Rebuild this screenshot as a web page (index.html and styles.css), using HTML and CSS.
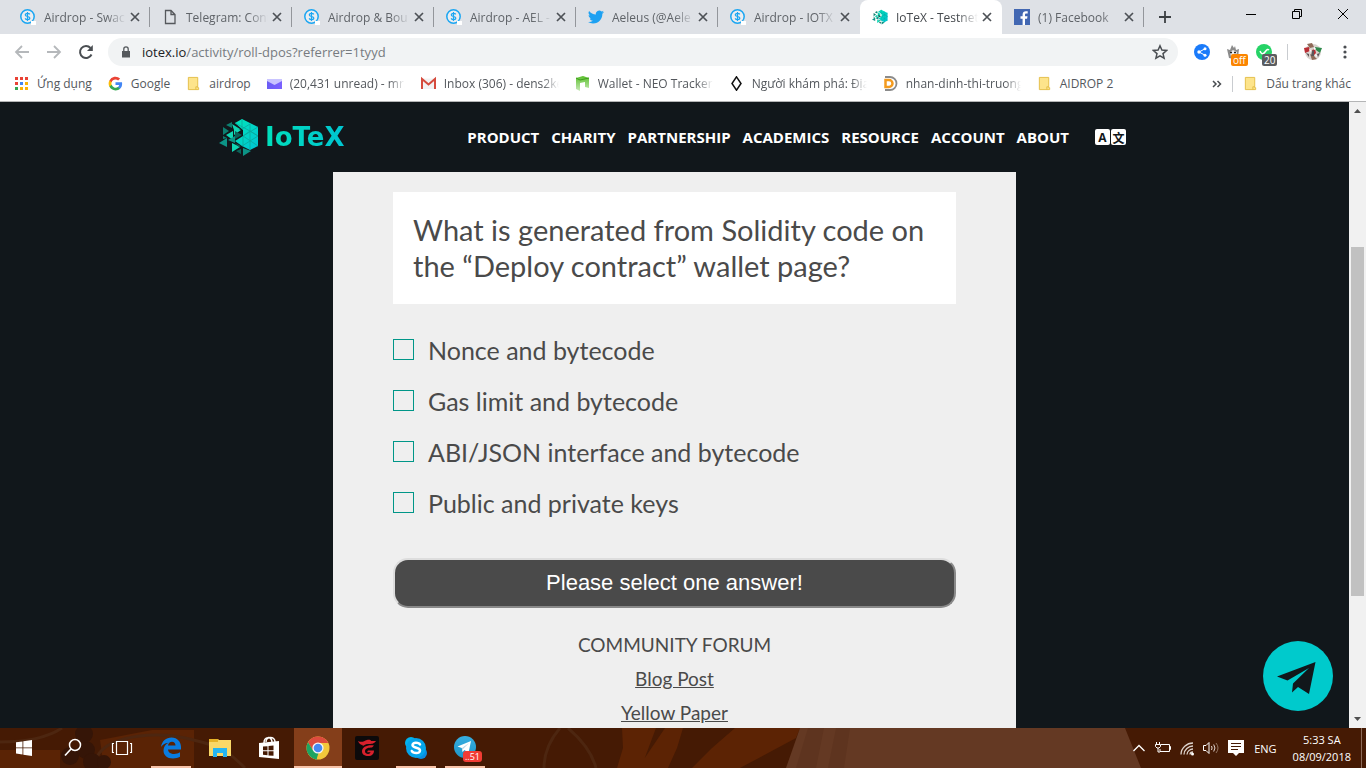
FILE: index.html
```html
<!DOCTYPE html>
<html lang="en">
<head>
<meta charset="utf-8">
<title>IoTeX - Testnet</title>
<link rel="stylesheet" href="styles.css">
</head>
<body>
<svg class="defs" aria-hidden="true">
  <defs>
    <linearGradient id="teal" x1="0" y1="0" x2="1" y2="1"><stop offset="0" stop-color="#00e6b8"/><stop offset="1" stop-color="#00c3d5"/></linearGradient>
    <linearGradient id="sky" x1="0" y1="0" x2="0" y2="1"><stop offset="0" stop-color="#37aee2"/><stop offset="1" stop-color="#1e96c8"/></linearGradient>
    <linearGradient id="neo" x1="0" y1="0" x2="0" y2="1"><stop offset="0" stop-color="#5abf2c"/><stop offset="1" stop-color="#c9eab8"/></linearGradient>
    <linearGradient id="mail" x1="0" y1="0" x2="1" y2="0"><stop offset="0" stop-color="#6a5cf5"/><stop offset="1" stop-color="#7b61ff"/></linearGradient>
    <symbol id="coin" viewBox="0 0 16 16"><circle cx="7.5" cy="7.5" r="6.7" fill="#fff" fill-opacity=".4" stroke="#1ba6f2" stroke-width="1.5"/><path d="M9.8 5.4C9.3 4.5 8.4 4.3 7.5 4.3c-1.300 0-2.200.6-2.200 1.600 0 2.200 4.500 1 4.500 3.200 0 1-.9 1.600-2.200 1.600-1.200 0-2-.4-2.500-1.300M7.500 3v9" fill="none" stroke="#1ba6f2" stroke-width="1.200"/><path d="M11 12h5v4h-5z" fill="#fff"/></symbol>
    <symbol id="close" viewBox="0 0 10 10"><path d="M1 1l8 8M9 1l-8 8" stroke="#4d5156" stroke-width="1.700"/></symbol>
    <symbol id="page" viewBox="0 0 16 16"><path d="M3.500 1.500h5.500l4 4v9h-9.500zM9 1.500v4h4" fill="none" stroke="#55585c" stroke-width="1.300"/></symbol>
    <symbol id="bird" viewBox="0 0 24 24"><path fill="#1da1f2" d="M24 4.600c-.9.4-1.800.7-2.800.8 1-.6 1.800-1.600 2.200-2.700-1 .6-2 1-3.100 1.200a4.900 4.900 0 0 0-8.400 4.500C7.700 8.200 4.100 6.200 1.700 3.100a4.900 4.900 0 0 0 1.500 6.600c-.8 0-1.600-.2-2.200-.6v.1c0 2.400 1.700 4.400 3.900 4.800-.7.200-1.500.2-2.200.1.600 2 2.400 3.400 4.600 3.400A9.900 9.900 0 0 1 0 19.500 14 14 0 0 0 7.500 21.700c9.100 0 14-7.500 14-14v-.6c1-.7 1.800-1.600 2.500-2.500z"/></symbol>
    <symbol id="folder" viewBox="0 0 14 16"><path d="M1.500 1.500h10v11h1v2h-11z" fill="#fde48b" stroke="#e3bd45"/><path d="M9.500 14.500v-3h2" fill="none" stroke="#e3bd45"/></symbol>
    <symbol id="mark" viewBox="0 0 40 38">
      <path d="M23 1l16 8v19l-8 4-8-4-7-5 8-5v-6l-8-7z" fill="url(#teal)"/>
      <path d="M16 5l15 8 8 5-8 5-8 5M23 1v10l8-5v26M39 9l-15 9 15 10M39 18l-8-5-7 5v10" fill="none" stroke="#0aa79c" stroke-width=".8"/>
      <path d="M13 6l8 5-6 1zM15 9l7 3-7 5zM7 17l7-4v9zM13 25l8 4-8 5z" fill="#10d6b4"/>
      <path d="M7 7l6-3v6zM4 9l6 4-6 4zM4 18l4 2-4 1z" fill="#0c7f70"/>
      <path d="M0 25l8-5v9zM9 22l7-4v7zM24 30l8 3-8 5z" fill="#0c9486"/>
      <path d="M16 13l7 4-7 4zM16 25l6 3-2 1zM22 31v5l-5-3z" fill="#0b6158"/>
    </symbol>
    <symbol id="chrome" viewBox="0 0 24 24"><circle cx="12" cy="12" r="11.500" fill="#f2c73b"/><path d="M2 6.300A11.500 11.500 0 0 1 22.300 7H12L7 14.500z" fill="#dd4b3e"/><path d="M2 6.300l5.300 8.700L11 23.400A11.500 11.500 0 0 1 2 6.300z" fill="#1da462"/><path d="M7 14l5.500 3-2 6.400C9 23 6 22 4 19z" fill="#1da462"/><circle cx="12" cy="12" r="5.600" fill="#f5f5f5"/><circle cx="12" cy="12" r="4.300" fill="#4688f1"/></symbol>
  </defs>
</svg>

<div class="browser">
  <div class="tabstrip">
    <div class="tab"><svg class="fav"><use href="#coin"/></svg><span class="tab-title">Airdrop - Swac</span><button class="tab-close" aria-label="Close tab"><svg><use href="#close"/></svg></button></div>
    <div class="tab"><svg class="fav"><use href="#page"/></svg><span class="tab-title">Telegram: Cont</span><button class="tab-close" aria-label="Close tab"><svg><use href="#close"/></svg></button></div>
    <div class="tab"><svg class="fav"><use href="#coin"/></svg><span class="tab-title">Airdrop &amp; Bou</span><button class="tab-close" aria-label="Close tab"><svg><use href="#close"/></svg></button></div>
    <div class="tab"><svg class="fav"><use href="#coin"/></svg><span class="tab-title">Airdrop - AEL -</span><button class="tab-close" aria-label="Close tab"><svg><use href="#close"/></svg></button></div>
    <div class="tab"><svg class="fav"><use href="#bird"/></svg><span class="tab-title">Aeleus (@Aele</span><button class="tab-close" aria-label="Close tab"><svg><use href="#close"/></svg></button></div>
    <div class="tab last-before"><svg class="fav"><use href="#coin"/></svg><span class="tab-title">Airdrop - IOTX</span><button class="tab-close" aria-label="Close tab"><svg><use href="#close"/></svg></button></div>
    <div class="tab active"><svg class="fav"><use href="#mark"/></svg><span class="tab-title">IoTeX - Testnet</span><button class="tab-close" aria-label="Close tab"><svg><use href="#close"/></svg></button></div>
    <div class="tab"><svg class="fav" viewBox="0 0 16 16"><path d="M0 0h16v16H0z" fill="#4267b2"/><path d="M11 16V9.800h2.100l.4-2.500H11V5.800c0-.8.3-1.300 1.400-1.300h1.300V2.300c-.4 0-1-.1-1.800-.1-2 0-3.300 1.200-3.300 3.300v1.800H6.500v2.500h2.100V16z" fill="#fff"/></svg><span class="tab-title">(1) Facebook</span><button class="tab-close" aria-label="Close tab"><svg><use href="#close"/></svg></button></div>
    <button class="new-tab" aria-label="New tab"><svg viewBox="0 0 12 12"><path d="M6 0v12M0 6h12" stroke="#3c4043" stroke-width="1.800"/></svg></button>
    <div class="window-buttons">
      <button aria-label="Minimize"><svg viewBox="0 0 12 12"><path d="M1 6.500h10" stroke="#000"/></svg></button>
      <button aria-label="Restore"><svg viewBox="0 0 12 12"><path d="M1.500 3.500h7v7h-7zM3.500 3.500v-2h7v7h-2" fill="none" stroke="#000"/></svg></button>
      <button aria-label="Close"><svg viewBox="0 0 12 12"><path d="M1 1l10 10M11 1L1 11" stroke="#000"/></svg></button>
    </div>
  </div>

  <div class="toolbar">
    <button class="nav-btn" aria-label="Back"><svg viewBox="0 0 16 16"><path d="M15 8H2M8 2L2 8l6 6" fill="none" stroke="#b5b8bb" stroke-width="1.800"/></svg></button>
    <button class="nav-btn" aria-label="Forward"><svg viewBox="0 0 16 16"><path d="M1 8h13M8 2l6 6-6 6" fill="none" stroke="#b5b8bb" stroke-width="1.800"/></svg></button>
    <button class="nav-btn" aria-label="Reload"><svg viewBox="0 0 16 16"><path d="M13.500 10.500A6 6 0 1 1 12.500 4" fill="none" stroke="#4a4e52" stroke-width="2"/><path d="M14.800 1v6H9z" fill="#4a4e52"/></svg></button>
    <div class="omnibox">
      <svg class="lock" viewBox="0 0 10 12"><path d="M1 5h8v6.500H1z" fill="#55595d"/><path d="M2.800 5V3a2.200 2.200 0 0 1 4.400 0v2" fill="none" stroke="#55595d" stroke-width="1.300"/></svg>
      <span class="url">iotex.io<span>/activity/roll-dpos?referrer=1tyyd</span></span>
      <button class="star" aria-label="Bookmark this page"><svg viewBox="0 0 16 16"><path d="M8 1.800l1.900 4.300 4.700.4-3.600 3.100 1.100 4.600L8 11.800l-4.100 2.400L5 9.600 1.400 6.500l4.700-.4z" fill="none" stroke="#4a4e52" stroke-width="1.500"/></svg></button>
    </div>
    <div class="extensions">
      <button aria-label="Share"><svg viewBox="0 0 16 16"><circle cx="8" cy="8" r="8" fill="#1a7bfa"/><path d="M11 4.800L5 8l6 3.200" stroke="#fff" fill="none"/><circle cx="11" cy="4.800" r="1.500" fill="#fff"/><circle cx="5" cy="8" r="1.700" fill="#fff"/><circle cx="11" cy="11.200" r="1.500" fill="#fff"/></svg></button>
      <button aria-label="Blocker off"><svg viewBox="0 0 16 16"><path d="M2 5l3 1 2-5 2 3 1-2 1 4 3-1-1 9-4 1-5-1z" fill="#8b8b8b"/><path d="M5 8l3-2 4 2-1 5H6z" fill="#eee"/><path d="M5 8.500h2M9 8.500h2" stroke="#222" stroke-width="1.500"/></svg><span class="badge orange">off</span></button>
      <button aria-label="Messages"><svg viewBox="0 0 16 16"><circle cx="8" cy="8" r="8" fill="#25d366"/><path d="M4 7c1 3 3 4 5 1s3-3 4-2" fill="none" stroke="#fff" stroke-width="1.500"/></svg><span class="badge gray">20</span></button>
      <i class="divider"></i>
      <button class="avatar" aria-label="Profile"><svg viewBox="0 0 20 20"><circle cx="10" cy="10" r="8" fill="#d9d3ce"/><path d="M1 6l5-1 1 4-5 2zM9 8l3-1 1 4-3 3z" fill="#b92e35"/><path d="M12 5l7 1-2 5-4-3z" fill="#2f8a4c"/><path d="M4 2l5-1 2 4-4 1zM7 12l4 2 3 3-5 1z" fill="#8f6a58"/><path d="M9 9l2-1v6H8zM3 11l3 1v3zM14 12l3-1-2 4z" fill="#5b5658"/><path d="M6 7l2 1-1 3zM11 5l2 2-2 1zM12 12l2 1-1 3z" fill="#fff"/></svg></button>
      <button class="kebab" aria-label="Menu"><svg viewBox="0 0 4 16"><circle cx="2" cy="3" r="1.600" fill="#4a4e52"/><circle cx="2" cy="8" r="1.600" fill="#4a4e52"/><circle cx="2" cy="13" r="1.600" fill="#4a4e52"/></svg></button>
    </div>
  </div>

  <div class="bookmarks">
    <a class="bookmark" href="#"><svg viewBox="0 0 15 15"><path d="M1 1h3v3H1zM6 1h3v3H6zM11 1h3v3h-3zM1 6h3v3H1z" fill="#e94235"/><path d="M6 6h3v3H6z" fill="#4285f4"/><path d="M11 6h3v3h-3zM6 11h3v3H6zM11 11h3v3h-3z" fill="#fbb206"/><path d="M1 11h3v3H1z" fill="#34a853"/></svg><span>Ứng dụng</span></a>
    <a class="bookmark" href="#"><svg viewBox="0 0 24 24"><path fill="#4285f4" d="M22.600 12.300c0-.8-.1-1.500-.2-2.300H12v4.300h5.900a5 5 0 0 1-2.200 3.300v2.800h3.600c2.100-1.900 3.300-4.700 3.300-8.100z"/><path fill="#34a853" d="M12 23c3 0 5.500-1 7.300-2.700l-3.600-2.800a6.600 6.600 0 0 1-9.900-3.400H2.200v2.800A11 11 0 0 0 12 23z"/><path fill="#fbbc05" d="M5.800 14.100a6.600 6.600 0 0 1 0-4.200V7.100H2.200a11 11 0 0 0 0 9.900z"/><path fill="#ea4335" d="M12 5.400c1.600 0 3.100.6 4.200 1.600l3.200-3.100A11 11 0 0 0 2.200 7.100l3.600 2.800A6.600 6.600 0 0 1 12 5.400z"/></svg><span>Google</span></a>
    <a class="bookmark" href="#"><svg><use href="#folder"/></svg><span>airdrop</span></a>
    <a class="bookmark long" href="#"><svg viewBox="0 0 15 15"><path d="M0 3h15v10H0z" fill="url(#mail)"/><path d="M0 3h15v2L7.500 9 0 5z" fill="#c9c4ff"/></svg><span>(20,431 unread) - mr.</span></a>
    <a class="bookmark long" href="#"><svg viewBox="0 0 15 15"><path d="M1 2.500h13v10.500H1z" fill="#f2f2f2"/><path d="M1 13V3l6.500 5.500L14 3v10" fill="none" stroke="#d54b3d" stroke-width="2"/></svg><span>Inbox (306) - dens2ke</span></a>
    <a class="bookmark long" href="#"><svg viewBox="0 0 15 15"><path d="M1 2l7-2 6 2v10l-4-1V6L5 7v8l-4-2z" fill="url(#neo)"/><path d="M1 2l4 2 9-2" stroke="#3d9f1b" fill="none"/></svg><span>Wallet - NEO Tracker</span></a>
    <a class="bookmark long" href="#"><svg viewBox="0 0 15 15"><path d="M7.500 0.800L12 7.500l-4.500 6.700L3 7.500z" fill="none" stroke="#111" stroke-width="1.500"/></svg><span>Người khám phá: Địa</span></a>
    <a class="bookmark long" href="#"><svg viewBox="0 0 15 15"><path d="M2 1h5a6.500 6.500 0 0 1 0 13H2" fill="none" stroke="#8b8b8b" stroke-width="1.800"/><path d="M2.500 4H6a3.500 3.500 0 0 1 0 7H2.500z" fill="none" stroke="#f39a1e" stroke-width="2.500"/></svg><span>nhan-dinh-thi-truong</span></a>
    <a class="bookmark" href="#"><svg><use href="#folder"/></svg><span>AIDROP 2</span></a>
    <button class="more" aria-label="More bookmarks"><svg viewBox="0 0 10 8"><path d="M1 1l3 3-3 3M5.500 1l3 3-3 3" fill="none" stroke="#4a4e52" stroke-width="1.500"/></svg></button>
    <i class="divider"></i>
    <a class="bookmark other" href="#"><svg><use href="#folder"/></svg><span>Dấu trang khác</span></a>
  </div>

  <div class="viewport">
    <div class="site">
      <header class="site-header">
        <a class="logo" href="#"><svg><use href="#mark"/></svg><span>IoTeX</span></a>
        <nav class="site-nav">
          <a href="#">PRODUCT</a><a href="#">CHARITY</a><a href="#">PARTNERSHIP</a><a href="#">ACADEMICS</a><a href="#">RESOURCE</a><a href="#">ACCOUNT</a><a href="#">ABOUT</a>
          <button class="lang" aria-label="Language"><span>A</span><span>文</span></button>
        </nav>
      </header>
      <main class="quiz">
        <h1 class="question">What is generated from Solidity code on the “Deploy contract” wallet page?</h1>
        <form class="options">
          <label><input type="checkbox"><span>Nonce and bytecode</span></label>
          <label><input type="checkbox"><span>Gas limit and bytecode</span></label>
          <label><input type="checkbox"><span>ABI/JSON interface and bytecode</span></label>
          <label><input type="checkbox"><span>Public and private keys</span></label>
          <button class="submit" type="button">Please select one answer!</button>
        </form>
        <div class="links">
          <span>COMMUNITY FORUM</span>
          <a href="#">Blog Post</a>
          <a href="#">Yellow Paper</a>
        </div>
      </main>
      <a class="telegram" href="#" aria-label="Telegram"><svg viewBox="0 0 70 70"><circle cx="35" cy="35" r="35" fill="#00cacc"/><path d="M52.500 21L14 35.500l10.500 4L46 27 30 42.500l-1 9 6-5.500 11 7z" fill="#11171b"/></svg></a>
    </div>
    <div class="scrollbar">
      <svg viewBox="0 0 17 17"><path d="M5 11h7L8.500 7z" fill="#505050"/></svg>
      <div class="track"><div class="thumb"></div></div>
      <svg viewBox="0 0 17 17"><path d="M5 6h7l-3.500 4z" fill="#505050"/></svg>
    </div>
  </div>

  <footer class="taskbar">
    <svg class="wallpaper" viewBox="0 0 1366 40" preserveAspectRatio="none">
      <path d="M0 0h1366v40H0z" fill="#451a04"/>
      <path d="M0 22h60v18H0zM100 12l52-10h42v38H104z" fill="#5a2305"/>
      <path d="M622 0h34l-15 40h-24l6-20zM665 0h18l-6 20-9 20h-30zM735 0h65l-4 10-56 30h-48l20-20z" fill="#5c2304"/>
      <path d="M0 14C30 14 50 8 62 0M96 40C90 10 150 2 185 10s40 10 60 30M560 0c-12 14-16 26-16 40M568 0c14 12 24 24 28 40" fill="none" stroke="#4d2610" stroke-width="3"/>
      <g fill="#351507"><circle cx="70" cy="28" r="9"/><circle cx="86" cy="22" r="9"/><circle cx="92" cy="34" r="9"/><circle cx="104" cy="34" r="7"/><circle cx="84" cy="6" r="9"/></g>
      <path d="M800 0h325l16 40H786z" fill="#643923"/>
      <path d="M808 0h16l-8 40h-20zM836 0h14l-6 40h-16z" fill="#5e341f"/>
    </svg>
    <div class="task-items">
      <button aria-label="Start"><svg viewBox="0 0 24 24"><path d="M4 6.300l6.500-.9v6.100H4zM11.300 5.300L20 4v7.500h-8.700zM4 12.300h6.500v6.200L4 17.600zM11.300 12.300H20V20l-8.700-1.300z" fill="#fff"/></svg></button>
      <button aria-label="Search"><svg viewBox="0 0 24 24"><circle cx="14" cy="9" r="5.500" fill="none" stroke="#fff" stroke-width="1.500"/><path d="M10 13l-6 6.500" stroke="#fff" stroke-width="1.700"/></svg></button>
      <button aria-label="Task view"><svg viewBox="0 0 24 24"><path d="M6.500 5.500h11v13h-11zM4 7.500H2.500v9H4M20 7.500h1.500v9H20" fill="none" stroke="#fff" stroke-width="1.200"/></svg></button>
      <button class="open" aria-label="Edge"><svg viewBox="0 0 24 24"><path d="M2 11C3 5 7 1.500 12.500 1.500c6 0 9.500 4.500 9.500 9.500v2.500H9c.2 3 3 4.500 6 4.500 2.300 0 4.300-.6 6-1.700v4.500c-2 1-4.500 1.600-7 1.600-6 0-9.500-3.400-9.500-8 0-3.500 2-6.300 5-7.700C5.500 7 3.500 8.700 2 11zm7-1.500h7.500C16.500 7 15 5.700 13 5.700S9.300 7 9 9.500z" fill="#0a7ce0"/></svg></button>
      <button aria-label="Files"><svg viewBox="0 0 24 24"><path d="M1 3h9l1 1h12v16H1z" fill="#f9d867"/><path d="M1 3h9v3H1z" fill="#e6b327"/><path d="M5 21v-9h14v9h-4v-4H9v4z" fill="#25b5f0"/></svg></button>
      <button aria-label="Store"><svg viewBox="0 0 24 24"><path d="M2 7l20-2v18L2 21z" fill="#fff"/><path d="M7 7c0-7 8-7 8-1M9 6c0-6 9-6 9 0" fill="none" stroke="#fff" stroke-width="1.500"/><path d="M6 10.500l4.500-.3v4H6zM11.500 10l5-.5v4.700h-5zM6 15.200h4.500v4L6 18.700zM11.500 15.200h5v4.600l-5-.4z" fill="#451a04"/></svg></button>
      <button class="open current" aria-label="Chrome"><svg><use href="#chrome"/></svg></button>
      <button aria-label="Garena"><svg viewBox="0 0 24 24"><rect width="24" height="24" rx="2" fill="#0c0a0b"/><path d="M3 5c4 2 6 0 9-1 2-.6 4 0 4 1l5 0c-2 3-5 3-8 3-3 0-4 2-6 2 1-1 1-1 1-1-3 0-4-2-5-4z" fill="#d8202c"/><path d="M19 9.500c-6-1-12 1-12 6 0 3 3 4.500 6 4.500 4 0 6-2 6-5.500h-6l-1 1.800h3.500c-.5 2.500-5.500 2-5.500-1C10 12 14 11.500 17 11.500z" fill="#d8202c"/></svg></button>
      <button class="open" aria-label="Skype"><svg viewBox="0 0 24 24"><circle cx="7" cy="7" r="6" fill="#00b3f0"/><circle cx="17" cy="17" r="6" fill="#0a8ce0"/><circle cx="12" cy="12" r="10" fill="#04a4ea"/><path d="M16 8.500C15 6.500 8.500 5.800 8.500 9c0 3.500 7.500 2 7.500 5.500 0 3.600-7 3-8.200.5" fill="none" stroke="#fff" stroke-width="2.500" stroke-linecap="round"/></svg></button>
      <button class="open" aria-label="Telegram"><svg viewBox="0 0 24 24"><circle cx="12" cy="11" r="11" fill="url(#sky)"/><path d="M4.500 10.500L18 5l-2.500 12-4-3-2 2-.7-4z" fill="#fff"/><path d="M9 12l7-5-6 6-.5 3z" fill="#b9d5e6"/></svg><span class="count">..51</span></button>
    </div>
    <div class="tray">
      <button aria-label="Hidden icons"><svg viewBox="0 0 16 16"><path d="M2.500 11L8 5.500l5.500 5.500" fill="none" stroke="#fff" stroke-width="1.300"/></svg></button>
      <button aria-label="Battery"><svg viewBox="0 0 16 16"><path d="M6 4.500h8.500v7H5V9M14.500 6.500h1v3h-1M1.500 2v2M4.500 2v2M.5 4.500h5v2L4 8H2L.5 6.500zM3 8v4h2" fill="none" stroke="#fff"/></svg></button>
      <button aria-label="Network"><svg viewBox="0 0 16 16"><path d="M2 14.500C2 8 8 3 14 3M5 14.500C5 10 9.500 6 14 6M8 14.500C8 11.500 11 9 14 9M11 14.500C11 13 12.500 12 14 12" fill="none" stroke="#ddd3cd" stroke-width="1.300"/><circle cx="13.500" cy="14" r="1.500" fill="#fff"/></svg></button>
      <button aria-label="Volume"><svg viewBox="0 0 16 16"><path d="M.5 5.500h2.500l3-3v11l-3-3H.5z" fill="none" stroke="#fff"/><path d="M8.500 6a4 4 0 0 1 0 4M10.700 4.500a6 6 0 0 1 0 7" fill="none" stroke="#e5d9d3"/><path d="M13 3a8 8 0 0 1 0 10" fill="none" stroke="#947765"/></svg></button>
      <button class="action" aria-label="Notifications"><svg viewBox="0 0 16 16"><path d="M0 0h16v13h-5l-3 3-3-3H0z" fill="#fff"/><path d="M3 3.500h10M3 6.500h10M3 9.500h7" stroke="#451a04"/></svg></button>
      <span class="input-lang">ENG</span>
      <div class="clock"><span>5:33 SA</span><span>08/09/2018</span></div>
      <i class="peek"></i>
    </div>
  </footer>
</div>
</body>
</html>
```
FILE: styles.css
```css
* { box-sizing: border-box; }
body { margin: 0; font-family: "Open Sans", "Noto Sans", sans-serif; font-size: 12px; }
button { margin: 0; padding: 0; border: 0; background: none; font: inherit; color: inherit; }
a { color: inherit; text-decoration: none; }
svg { display: block; flex: none; }
.defs { position: absolute; width: 0; height: 0; }

.browser { display: flex; flex-direction: column; height: 100vh; overflow: hidden; background: #fff; }

/* Tabs */
.tabstrip { display: flex; align-items: stretch; flex: none; height: 34px; padding-left: 8px; background: #dee1e6; color: #5f6368; }
.tab { position: relative; display: flex; align-items: center; flex: 0 1 142px; min-width: 0; padding: 0 10px 0 12px; }
.tab::after { content: ""; position: absolute; right: 0; top: 7px; width: 1px; height: 20px; background: #93969b; }
.tab.active::after, .tab.last-before::after { display: none; }
.tab.active { background: #fff; border-radius: 8px 8px 0 0; color: #45494d; }
.fav { width: 16px; height: 16px; margin-right: 8px; }
.tab-title { flex: 1; min-width: 0; overflow: hidden; white-space: nowrap; mask-image: linear-gradient(to left, transparent, #000 20px); }
.tab-close { margin-left: 4px; }
.tab-close svg { width: 10px; height: 10px; }
.new-tab { margin-left: 15px; }
.new-tab svg { width: 12px; height: 12px; }
.window-buttons { display: flex; align-items: center; margin-left: auto; height: 28px; }
.window-buttons button { display: grid; place-items: center; width: 46px; height: 28px; }
.window-buttons svg { width: 12px; height: 12px; }

/* Toolbar */
.toolbar { display: flex; align-items: center; flex: none; height: 36px; padding: 0 16px 0 6px; }
.nav-btn { display: grid; place-items: center; width: 32px; height: 28px; }
.nav-btn svg { width: 16px; height: 16px; }
.omnibox { display: flex; align-items: center; flex: 1; height: 28px; margin-left: 6px; padding: 0 10px 0 13px; border-radius: 14px; background: #f1f3f4; }
.lock { width: 10px; height: 12px; margin-right: 11px; }
.url { flex: 1; font-size: 13px; color: #202124; }
.url span { color: #777b80; }
.star svg { width: 16px; height: 16px; }
.extensions { display: flex; align-items: center; gap: 15px; margin-left: 16px; }
.extensions button { position: relative; }
.extensions svg { width: 16px; height: 16px; }
.extensions .avatar svg { width: 20px; height: 20px; }
.extensions .kebab { padding: 0 3px 0 5px; }
.extensions .kebab svg { width: 4px; height: 16px; }
.badge { position: absolute; left: 6px; top: 10px; padding: 0 2px; border-radius: 2px; color: #fff; font-size: 10px; line-height: 12px; }
.badge.orange { background: #fb8500; }
.badge.gray { background: #5a5d60; }
.divider { width: 1px; height: 16px; background: #c9ccd0; }

/* Bookmarks */
.bookmarks { display: flex; align-items: center; flex: none; height: 32px; padding: 0 15px 4px 14px; border-bottom: 1px solid #b4b5b6; color: #54585d; }
.bookmark { display: flex; align-items: center; gap: 8px; margin-right: 16px; white-space: nowrap; }
.bookmark svg { width: 15px; height: 15px; }
.bookmark.long { flex: 0 1 138px; min-width: 0; }
.bookmark.long span { flex: 1; overflow: hidden; mask-image: linear-gradient(to left, transparent, #000 16px); }
.bookmark.other { margin: 0 0 0 10px; }
.more { margin: 0 10px 0 auto; }
.more svg { width: 10px; height: 8px; }

/* Page */
.viewport { display: flex; flex: 1; min-height: 0; }
.site { position: relative; flex: 1; min-width: 0; overflow: hidden; background: #11171b; }
.site-header { display: flex; align-items: center; justify-content: space-between; max-width: 911px; height: 70px; margin: 0 auto; padding-right: 4px; }
.logo { display: flex; align-items: center; gap: 6px; font: 700 26px "DejaVu Sans", sans-serif; }
.logo span { background: linear-gradient(90deg, #00dfbb, #00c6d2); background-clip: text; color: transparent; }
.logo svg { width: 40px; height: 38px; }
.site-nav { display: flex; align-items: center; gap: 12px; color: #fff; font-size: 15px; font-weight: 700; }
.lang { display: flex; gap: 1px; margin-left: 14px; color: #11171b; font: 700 12px "Open Sans", "Noto Sans CJK SC", sans-serif; }
.lang span { display: grid; place-items: center; width: 15px; height: 16px; border-radius: 2px; background: #fff; }
.quiz { width: 50vw; margin: 0 auto; padding: 20px 60px; background: #efefef; color: #4a4a4a; font-family: Lato, "Open Sans", sans-serif; }
.question { margin: 0; padding: 20px; background: #fff; font-size: 29px; font-weight: 400; line-height: 36px; }
.options { display: flex; flex-direction: column; padding-top: 20px; }
.options label { display: flex; align-items: center; gap: 14px; height: 51px; font-size: 25px; }
.options input { appearance: none; width: 21px; height: 21px; margin: 0; border: 1px solid #009688; }
.submit { height: 50px; margin: 30px 0 20px; border: 2px outset #ddd; border-radius: 15px; background: #4a4a4a; color: #fff; font: 22px "Liberation Sans", Arial, sans-serif; }
.links { display: flex; flex-direction: column; align-items: center; font-size: 19px; line-height: 34px; }
.links a { text-decoration: underline; }
.telegram { position: absolute; right: 16px; bottom: 17px; }
.telegram svg { width: 70px; height: 70px; }
.scrollbar { display: flex; flex-direction: column; flex: none; width: 17px; background: #f1f1f1; }
.scrollbar svg { width: 17px; height: 17px; }
.track { display: flex; flex: 1; padding: 0 2px; }
.thumb { width: 100%; height: 59%; margin-top: 128px; background: #c1c1c1; }

/* Taskbar */
.taskbar { position: relative; display: flex; justify-content: space-between; flex: none; height: 40px; color: #fff; }
.wallpaper { position: absolute; inset: 0; width: 100%; height: 100%; }
.task-items, .tray { position: relative; display: flex; align-items: center; }
.task-items { gap: 1px; }
.task-items button { position: relative; display: grid; place-items: center; width: 48px; height: 40px; }
.task-items svg { width: 24px; height: 24px; }
.open::after { content: ""; position: absolute; left: 4px; right: 4px; bottom: 0; height: 2px; background: #f8c3a8; }
.current { background: #843e1a; }
.current::after { left: 0; right: 0; }
.count { position: absolute; left: 22px; top: 23px; padding: 0 2px; border-radius: 3px; background: #f23c34; font-size: 9px; line-height: 11px; }
.tray { gap: 8px; font-size: 11px; }
.tray svg { width: 16px; height: 16px; }
.action { margin-left: 1px; }
.input-lang { margin-left: 2px; }
.clock { display: flex; flex-direction: column; align-items: center; margin-left: 8px; line-height: 17px; }
.peek { width: 1px; height: 40px; margin: 0 4px 0 2px; background: #8c6a58; }
```
